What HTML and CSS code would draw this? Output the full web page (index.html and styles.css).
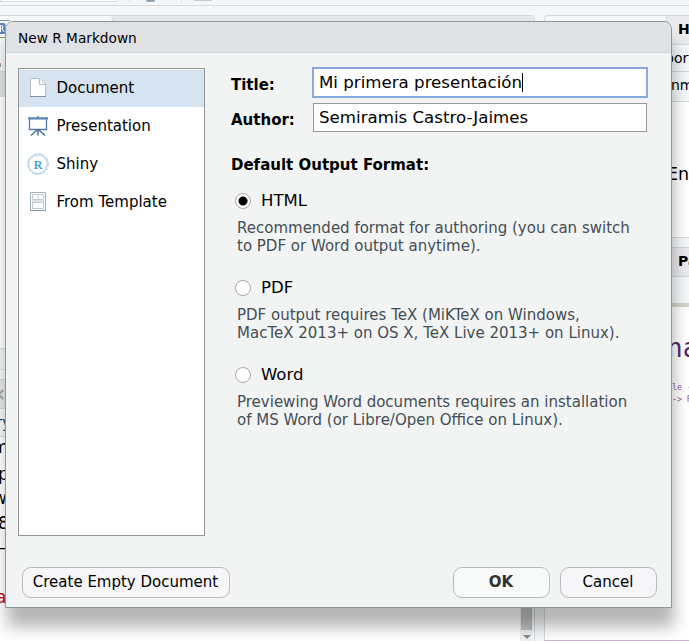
FILE: index.html
```html
<!DOCTYPE html>
<html lang="en">
<head>
<meta charset="utf-8">
<title>New R Markdown</title>
<link rel="stylesheet" href="styles.css">
</head>
<body>
<div class="ide">
  <div class="toolbar"><span class="goto"></span><i class="sep"></i><i class="gear"></i><i class="sep two"></i><i class="tool"></i></div>
  <div class="panes">
    <div class="left">
      <div class="source">
        <div class="tabs"><div class="tab"><svg width="10" height="18" viewBox="0 0 10 18"><path d="M0 .5h10M0 17.500h6" fill="none" stroke="#8a9299"/><path d="M0 3h3.500a2 2 0 0 1 2 2v7a2 2 0 0 1-2 2H0" fill="#5d83b8"/><path d="M.5 12V5.500h1a1.500 1.500 0 0 1 0 3H.5M2 8.500l2 3.500" fill="none" stroke="#fff"/></svg></div></div>
        <div class="strip"><i></i><i class="blue"></i></div>
        <div class="gutter"></div>
      </div>
      <div class="status"></div>
      <div class="console">
        <div class="ctab">×</div>
        <div class="cbar">ry</div>
        <div class="code"><span class="c1">m</span><span class="c2">p</span><span class="c3">w</span><span class="c4">8</span><span class="c5">–</span><span class="err">a</span></div>
        <div class="scroll"><i class="thumb"></i><i class="arrow"></i></div>
      </div>
    </div>
    <div class="right">
      <div class="env">
        <div class="rtabs"><b>History</b></div>
        <div class="rbar">port Dataset</div>
        <div class="rbar scope">nment</div>
        <div class="empty">Environment</div>
      </div>
      <div class="help">
        <div class="rtabs"><b>Packages</b></div>
        <div class="rbar hbar"></div>
        <div class="topic">na</div>
        <div class="snippet">le -<br>-&gt; R</div>
      </div>
    </div>
  </div>
</div>

<div class="dialog">
  <div class="caption">New R Markdown</div>
  <div class="content">
    <ul class="types">
      <li class="selected"><svg width="22" height="22" viewBox="0 0 22 22"><path d="M3.500 2.500h9.500l5.500 5.500v12.500h-15z" fill="#fff" stroke="#b4bec9"/><path d="M3 20.500h16" stroke="#8393a3"/><path d="M12.500 3v5.500H18" fill="#f3f5f7" stroke="#b4bdc6"/></svg><span>Document</span></li>
      <li><svg width="22" height="22" viewBox="0 0 22 22"><path d="M2.500 3.500h17v11h-17z" fill="#fff" stroke="#5478a8" stroke-width="1.300"/><path d="M1 2h20v2H1z" fill="#7fa2d2"/><path d="M1 3.800h20" stroke="#4f75a8"/><path d="M11 1v1.500M11 14.500v6M10 15l-6 5.500M12 15l6 5.500" fill="none" stroke="#4d70a0" stroke-width="1.500"/></svg><span>Presentation</span></li>
      <li><svg width="22" height="22" viewBox="0 0 22 22"><circle cx="11" cy="11" r="10.200" fill="#fff" stroke="#a9cbe2" stroke-width="1" stroke-dasharray="3 1"/><path d="M1 8l6-5 8-2 5 8-2 8-7 4-8-4zM3 5l4-2 7-1 6 4 1 6-5 8-9 1-6-7z" fill="none" stroke="#b9d2e8" stroke-width=".8"/><text x="11" y="15.500" text-anchor="middle" class="letter">R</text></svg><span>Shiny</span></li>
      <li><svg width="22" height="22" viewBox="0 0 22 22"><path d="M3.500 1.500h15v18h-15z" fill="#fff" stroke="#a3aebb"/><path d="M5.500 3.500h11v5h-11zM11 3.500v5M5.500 11.500h11v6h-11z" fill="#fff" stroke="#c2c9d0"/><path d="M5 10h12" stroke="#dfe2e5" stroke-width="2"/><path d="M3 19.500h16" stroke="#8393a3"/></svg><span>From Template</span></li>
    </ul>
    <div class="form">
      <div class="field"><label>Title:</label><div class="input focus"><span>Mi primera presentación</span><i class="caret"></i></div></div>
      <div class="field author"><label>Author:</label><div class="input"><span>Semiramis Castro-Jaimes</span></div></div>
      <h2>Default Output Format:</h2>
      <div class="option"><div class="radio"><i class="on"></i>HTML</div><p>Recommended format for authoring (you can switch<br>to PDF or Word output anytime).</p></div>
      <div class="option"><div class="radio"><i></i>PDF</div><p>PDF output requires TeX (MiKTeX on Windows,<br>MacTeX 2013+ on OS X, TeX Live 2013+ on Linux).</p></div>
      <div class="option"><div class="radio"><i></i>Word</div><p>Previewing Word documents requires an installation<br>of MS Word (or Libre/Open Office on Linux).</p></div>
    </div>
  </div>
  <div class="actions"><button class="create">Create Empty Document</button><button class="ok">OK</button><button>Cancel</button></div>
</div>
</body>
</html>
```
FILE: styles.css
```css
* { box-sizing: border-box; }
body { margin: 0; width: 689px; height: 641px; overflow: hidden; font-family: "DejaVu Sans", sans-serif; font-size: 15px; color: #000; background: #f6f7f9; }
.ide { height: 641px; display: flex; flex-direction: column; overflow: hidden; }
.toolbar { height: 6px; flex: none; border-bottom: 1px solid #d6dadc; background: #f4f8f9; display: flex; align-items: flex-start; }
.goto { width: 118px; height: 2px; background: #fff; border: 1px solid #d6dadc; border-top: 0; border-radius: 0 0 3px 0; }
.sep { width: 1px; height: 2px; background: #dce0e1; margin-left: 11px; }
.gear { width: 9px; height: 2px; margin-left: 16px; background: #91a2b5; border-radius: 0 0 5px 5px; }
.sep.two { margin-left: 26px; }
.tool { width: 18px; height: 1px; margin-left: 12px; background: #c2ccd5; }
.panes { flex: 1; display: flex; gap: 9px; padding-top: 9px; min-height: 0; }
.left { width: 535px; flex: none; display: flex; flex-direction: column; }
.source { height: 334px; border: 1px solid #d6dadc; border-left: 0; border-radius: 0 4px 0 0; background: #fff; }
.tabs { height: 23px; background: #e6e7e8; }
.tab { width: 113px; height: 23px; background: #f4f8f9; border-right: 1px solid #d6dadc; padding-top: 4px; border-radius: 0 3px 0 0; }
.tab svg { display: block; }
.strip { height: 33px; background: #f4f8f9; border-bottom: 1px solid #d6dadc; padding-top: 24px; }
.strip i { display: block; width: 1px; height: 2px; background: #e0906a; }
.strip .blue { background: #5fa9c4; }
.gutter { height: 25px; background: #e1e2e3; }
.status { height: 21px; background: #f0f4f7; border-bottom: 1px solid #d6dadc; margin-bottom: 9px; }
.console { flex: 1; position: relative; background: #fff; border-top: 1px solid #d6dadc; border-right: 1px solid #ccd6dc; }
.ctab { height: 29px; background: #e6e7e8; border-bottom: 1px solid #d6dadc; color: #aaa; font-size: 18px; font-weight: bold; line-height: 27px; text-indent: -9px; overflow: hidden; }
.cbar { width: 20px; height: 28px; background: #f4f8f9; border-bottom: 1px solid #d6dadc; color: #20364f; font-size: 15px; line-height: 28px; text-indent: -4px; overflow: hidden; }
.code { width: 20px; overflow: hidden; font-size: 17px; display: flex; flex-direction: column; margin-top: -2px; }
.code span { height: 24.500px; line-height: 24px; text-indent: -2px; }
.code .c1 { text-indent: -8px; }
.code .c2 { margin-top: 2px; }
.code .c3 { text-indent: -7px; }
.code .err { color: #c5060b; margin-top: 25px; text-indent: -4px; }
.scroll { position: absolute; right: 1px; top: 0; bottom: 0; width: 13px; background: #f0f0f0; display: flex; flex-direction: column; align-items: center; justify-content: flex-end; }
.thumb { width: 11px; height: 80px; background: #c1c1c1; margin-bottom: 5px; }
.arrow { border: 4px solid transparent; border-top: 4px solid #888; border-bottom: 0; margin-bottom: 2px; }
.right { flex: 1; min-width: 0; display: flex; flex-direction: column; gap: 9px; }
.env { height: 223px; border: 1px solid #d6dadc; border-right: 0; border-radius: 4px 0 0 0; background: #fff; overflow: hidden; white-space: nowrap; }
.rtabs { height: 29px; background: linear-gradient(90deg, #f4f8f9 121px, #d6dadc 121px, #d6dadc 122px, #ebebed 122px); border-bottom: 1px solid #d6dadc; line-height: 27px; font-size: 14px; padding-left: 133px; overflow: hidden; }
.rbar { height: 27px; background: #f4f8f9; border-bottom: 1px solid #d6dadc; line-height: 27px; font-size: 14px; padding-left: 120px; overflow: hidden; }
.scope { height: 30px; padding-left: 126px; }
.empty { padding: 60px 0 0 122px; font-size: 17.500px; line-height: 24px; }
.help { height: 394px; border: 1px solid #d6dadc; border-right: 0; border-bottom-color: #c9b3cc; background: #fff; overflow: hidden; white-space: nowrap; }
.hbar { height: 30px; border-bottom: 4px solid #d4d4cd; }
.topic { padding: 24px 0 0 122px; font: 26px/34px "DejaVu Sans Mono", monospace; color: #58285d; }
.snippet { padding: 16px 0 0 127px; font: 8.300px/12px "DejaVu Sans Mono", monospace; color: #a05aa5; }
.dialog { position: absolute; left: 5px; top: 21px; width: 667px; height: 587px; background: #f2f4f4; border: 1px solid #919696; border-radius: 8px 8px 0 0; box-shadow: 2px 19px 16px rgba(0,0,0,.29); display: flex; flex-direction: column; overflow: hidden; }
.caption { height: 31px; flex: none; background: #e0e1e5; border-bottom: 1px solid #d3d7d9; padding-left: 12px; font-size: 13.700px; line-height: 33px; }
.content { display: flex; gap: 26px; padding: 15px 24px 0 12px; height: 483px; }
.types { list-style: none; margin: 0; padding: 1px 0 0; width: 187px; height: 468px; flex: none; border: 1px solid #919696; background: #fff; }
.types li { height: 38px; padding: 0 0 2px 8px; display: flex; align-items: center; gap: 7.500px; }
.types li.selected { background: #d6e4f1; height: 37px; padding-bottom: 1px; margin-bottom: 1px; }
.types li.selected svg { margin-top: -2px; }
.letter { font: 13px "Liberation Serif", serif; fill: #2493cf; stroke: #2493cf; stroke-width: .2px; }
.form { flex: 1; }
.field { display: flex; align-items: center; height: 31px; margin-top: -1px; }
.field label { width: 82px; flex: none; font-weight: bold; font-size: 15px; padding-top: 5px; }
.author { margin-top: 4px; }
.input { display: flex; align-items: center; width: 334px; height: 29px; border: 1px solid #999; background: #fff; padding-left: 5px; font-size: 16.650px; white-space: nowrap; }
.input.focus { height: 31px; width: 336px; margin-left: -1px; margin-right: -1px; border: 2px solid #88a9df; }
.caret { width: 1px; height: 19px; background: #000; }
h2 { font-size: 15px; line-height: 20px; margin: 22px 0 15.500px; }
.option { height: 87px; }
.radio { display: flex; align-items: center; height: 20px; gap: 10px; padding-left: 4px; font-size: 16.500px; }
.radio i { width: 16px; height: 16px; border: 1px solid #a8a8a8; border-radius: 50%; background: #fff; }
.radio .on { background: radial-gradient(circle, #000 4px, #fff 5px); }
.option p { margin: 8px 0 0 6px; font-size: 15px; line-height: 18px; color: #444e54; white-space: nowrap; }
.actions { display: flex; padding: 31px 14px 0 16px; }
button { width: 97px; height: 31px; border: 1px solid #b9bcbe; border-radius: 9px; background: #f6f6f9; font: 15px "DejaVu Sans", sans-serif; padding: 0 1px 2px 0; color: #000; white-space: nowrap; }
.create { width: 208px; margin-right: auto; }
.ok { background: #f8faf9; font-weight: bold; color: #333; margin-right: 10px; }
```
